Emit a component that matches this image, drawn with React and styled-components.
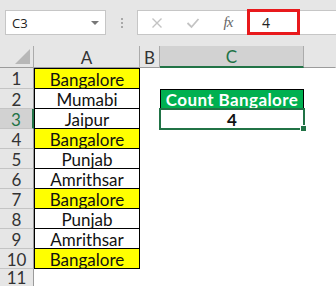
import React from 'react';
import styled, { createGlobalStyle } from 'styled-components';

const GlobalStyle = createGlobalStyle`
  body {
    margin: 0;
    background: #fff;
    overflow: hidden;
    font-family: Lato, "Liberation Sans", sans-serif;
  }
`;

const Window = styled.div`
  width: 336px;
  height: 286px;
  overflow: hidden;
  background: #fff;
`;

const Toolbar = styled.div`
  height: 46px;
  box-sizing: border-box;
  padding-top: 10px;
  background: #e6e6e6;
  display: flex;
  align-items: flex-start;
`;

const NameBox = styled.div`
  margin-left: 5px;
  width: 101px;
  height: 25px;
  box-sizing: border-box;
  background: #fff;
  border: 1px solid #c6c6c6;
  display: flex;
  align-items: center;
  justify-content: space-between;
  padding: 0 6px 0 6px;
  font-family: "Open Sans", "Liberation Sans", sans-serif;
  font-size: 13px;
  color: #222;
`;

const Caret = styled.span`
  width: 0;
  height: 0;
  border-left: 4px solid transparent;
  border-right: 4px solid transparent;
  border-top: 4px solid #777;
`;

const Dots = styled.div`
  width: 31px;
  height: 25px;
  display: flex;
  flex-direction: column;
  align-items: center;
  justify-content: center;
  gap: 2px;
  span {
    width: 2px;
    height: 2px;
    background: #a8a8a8;
  }
`;

const FormulaBar = styled.div`
  flex: 1;
  height: 25px;
  box-sizing: border-box;
  background: #fff;
  border: 1px solid #c6c6c6;
  border-right: none;
  display: flex;
  align-items: center;
  padding-left: 9px;
`;

const IconBtn = styled.div`
  width: 20px;
  height: 20px;
  margin-right: ${p => p.$gap}px;
  display: flex;
  align-items: center;
  justify-content: center;
  color: ${p => p.$dim ? '#c3c3c3' : '#666'};
`;

const Fx = styled.span`
  font-family: "Liberation Serif", serif;
  font-style: italic;
  font-size: 15px;
  color: #666;
  letter-spacing: -1px;
`;

const ValueBox = styled.div`
  align-self: flex-start;
  margin-top: -2px;
  width: 53px;
  height: 26px;
  box-sizing: border-box;
  border: 3px solid #e8191c;
  display: flex;
  align-items: center;
  padding-left: 12px;
  font-family: "Open Sans", "Liberation Sans", sans-serif;
  font-size: 14px;
  color: #222;
`;

const Sheet = styled.div`
  display: grid;
  grid-template-columns: 34px 106px 20px 144px 1fr;
  grid-template-rows: 22px 21px repeat(9, 20px) 17px;
  line-height: 1;
`;

const Corner = styled.div`
  background: #e6e6e6;
  border-right: 1px solid #ababab;
  border-bottom: 1px solid #9b9b9b;
  box-sizing: border-box;
  position: relative;
  &::after {
    content: '';
    position: absolute;
    right: 3px;
    bottom: 3px;
    width: 0;
    height: 0;
    border-left: 15px solid transparent;
    border-bottom: 15px solid #b7b7b7;
  }
`;

const ColHead = styled.div`
  box-sizing: border-box;
  background: ${p => p.$active ? '#d2d2d2' : '#e6e6e6'};
  color: ${p => p.$active ? '#217346' : '#333'};
  border-right: 1px solid ${p => p.$last ? 'transparent' : '#ababab'};
  border-bottom: ${p => p.$active ? '2px solid #217346' : '1px solid #9b9b9b'};
  display: flex;
  align-items: center;
  justify-content: center;
  padding-top: 1px;
  font-size: 17px;
`;

const RowHead = styled.div`
  box-sizing: border-box;
  background: ${p => p.$active ? '#d2d2d2' : '#e6e6e6'};
  color: ${p => p.$active ? '#217346' : '#333'};
  border-right: ${p => p.$active ? '2px solid #217346' : '1px solid #9b9b9b'};
  border-bottom: ${p => p.$last ? 'none' : '1px solid #c4c4c4'};
  display: flex;
  align-items: ${p => p.$last ? 'flex-start' : 'center'};
  justify-content: center;
  padding-top: ${p => p.$last ? 0 : 1}px;
  font-size: 17px;
`;

const CityCell = styled.div`
  box-sizing: border-box;
  background: ${p => p.$hl ? '#ffff00' : '#fff'};
  border: 1px solid #000;
  border-top: ${p => p.$first ? '1px solid #000' : 'none'};
  display: flex;
  align-items: center;
  justify-content: center;
  padding-top: 1px;
  font-size: 17px;
  color: #111;
`;

const Blank = styled.div`
  background: #fff;
`;

const TitleCell = styled.div`
  box-sizing: border-box;
  background: #00b050;
  border: 1px solid #000;
  display: flex;
  align-items: center;
  justify-content: center;
  padding-top: 1px;
  font-size: 17px;
  font-weight: 700;
  letter-spacing: 0.4px;
  color: #fff;
`;

const ResultCell = styled.div`
  box-sizing: border-box;
  position: relative;
  background: #fff;
  display: flex;
  align-items: center;
  justify-content: center;
  padding-top: 1px;
  font-size: 17px;
  font-weight: 700;
  color: #111;
  &::after {
    content: '';
    position: absolute;
    left: -1px;
    right: -1px;
    top: -1px;
    bottom: -1px;
    border: 2px solid #217346;
  }
`;

const Handle = styled.span`
  position: absolute;
  right: -3px;
  bottom: -3px;
  width: 5px;
  height: 5px;
  background: #217346;
  border: 1px solid #fff;
  z-index: 1;
`;

const cities = [
  ['Bangalore', true],
  ['Mumabi', false],
  ['Jaipur', false],
  ['Bangalore', true],
  ['Punjab', false],
  ['Amrithsar', false],
  ['Bangalore', true],
  ['Punjab', false],
  ['Amrithsar', false],
  ['Bangalore', true],
];

function CrossIcon() {
  return (
    <svg width="12" height="12" viewBox="0 0 12 12">
      <path d="M1.5 1.5 L10.5 10.5 M10.5 1.5 L1.5 10.5" stroke="currentColor" strokeWidth="1.4" fill="none" />
    </svg>
  );
}

function CheckIcon() {
  return (
    <svg width="14" height="12" viewBox="0 0 14 12">
      <path d="M1.5 6 L5.5 10 L12.5 2" stroke="currentColor" strokeWidth="1.8" fill="none" />
    </svg>
  );
}

export default function App() {
  const rows = [];
  for (let i = 1; i <= 11; i++) {
    const city = cities[i - 1];
    rows.push(
      <React.Fragment key={i}>
        <RowHead $active={i === 3} $last={i === 11}>{i}</RowHead>
        {city ? (
          <CityCell $hl={city[1]} $first={i === 1}>{city[0]}</CityCell>
        ) : (
          <Blank />
        )}
        <Blank />
        {i === 2 ? (
          <TitleCell>Count Bangalore</TitleCell>
        ) : i === 3 ? (
          <ResultCell>4<Handle /></ResultCell>
        ) : (
          <Blank />
        )}
        <Blank />
      </React.Fragment>
    );
  }

  return (
    <Window>
      <GlobalStyle />
      <Toolbar>
        <NameBox>
          <span>C3</span>
          <Caret />
        </NameBox>
        <Dots>
          <span />
          <span />
          <span />
        </Dots>
        <FormulaBar>
          <IconBtn $dim $gap={16}><CrossIcon /></IconBtn>
          <IconBtn $dim $gap={15}><CheckIcon /></IconBtn>
          <IconBtn $gap={9}><Fx>fx</Fx></IconBtn>
          <ValueBox>4</ValueBox>
        </FormulaBar>
      </Toolbar>
      <Sheet>
        <Corner />
        <ColHead>A</ColHead>
        <ColHead>B</ColHead>
        <ColHead $active>C</ColHead>
        <ColHead $last />
        {rows}
      </Sheet>
    </Window>
  );
}
